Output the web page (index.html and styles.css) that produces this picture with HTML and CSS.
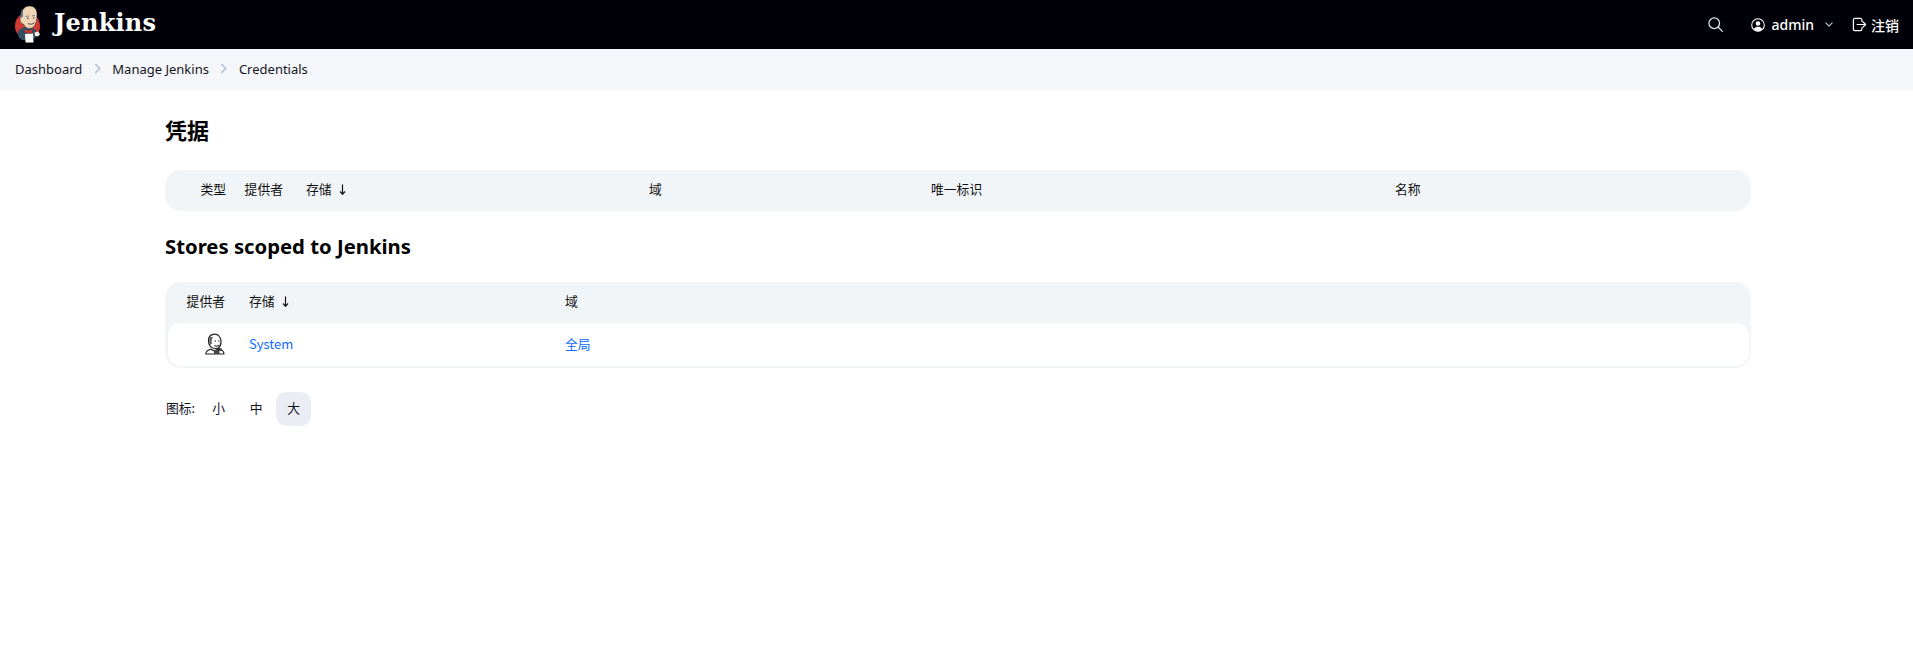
FILE: index.html
```html
<!DOCTYPE html>
<html lang="zh">
<head>
<meta charset="utf-8">
<title>Credentials - Jenkins</title>
<link rel="stylesheet" href="styles.css">
</head>
<body>
<header class="topbar">
  <div class="brand">
    <svg class="logo" viewBox="0 0 28 38" width="28" height="38">
      <ellipse cx="13.500" cy="21" rx="12.500" ry="13.500" fill="#d33833"/>
      <path d="M3.500 27c2-3 5-4.500 8-5l8 1.500c2.500 1 3.500 3 3.500 6l-2 4-4 1.500h-9L5 33z" fill="#335061"/>
      <path d="M8 9c0-5 3-8 7.500-8S23 4 23 9c0 4.500-.5 8-2 11-1.200 2.300-3 3.500-5.500 3.500-3 0-5-2-6-4.500-2 0-3.500-2-3.500-4.500 0-2.500 1-4 2-5.500z" fill="#f0d6b7" stroke="#231f20" stroke-width=".5"/>
      <path d="M7 13c-1-3.500-.5-7 2-9.500-.5 3-.5 5 0 7.500-.5 1-1.200 1.500-2 2z" fill="#49728b"/>
      <path d="M11.500 11.500l3.500-.6M18 10.800l3-.2" stroke="#49728b" stroke-width=".8"/>
      <path d="M13 13.200h1.600M19 13h1.300" stroke="#231f20" stroke-width="1"/>
      <path d="M14 18.500c2 1 4.500 1 6.500-.8" stroke="#231f20" stroke-width=".8" fill="none"/>
      <path d="M11 24.500l3.500 1.200 3.500-1.200.5 3-3 .3-1 1-1-1-3-.3z" fill="#d33833" stroke="#7a1a18" stroke-width=".3"/>
      <path d="M11 29l8-.5.5 9H11.500z" fill="#fff"/>
      <path d="M20.500 27.500l4-1 1.500 3-2 2-3-.5z" fill="#f0e6da"/>
    </svg>
    <span class="wordmark">Jenkins</span>
  </div>
  <div class="actions">
    <svg class="icon search" viewBox="0 0 24 24" width="15" height="15"><circle cx="10" cy="10" r="8.500"/><path d="M16.500 16.500L23 23"/></svg>
    <div class="user">
      <svg class="avatar" viewBox="0 0 16 16" width="14" height="14"><circle cx="8" cy="8" r="7.200" fill="none" stroke="#fff" stroke-width="1.200"/><circle cx="8" cy="6.300" r="2.600" fill="#fff"/><path d="M3.300 12.600C4.200 10.600 6 10 8 10s3.800.6 4.700 2.600C11.500 14.200 9.800 15 8 15s-3.500-.8-4.700-2.400z" fill="#fff"/></svg>
      <span>admin</span>
      <svg class="icon chevron" viewBox="0 0 10 6" width="8" height="5"><path d="M1 1l4 4 4-4"/></svg>
    </div>
    <div class="logout">
      <svg class="icon" viewBox="0 0 16 16" width="15" height="15"><path d="M10.500 4.500V3A1.500 1.500 0 0 0 9 1.500H3A1.500 1.500 0 0 0 1.500 3v10A1.500 1.500 0 0 0 3 14.500h6a1.500 1.500 0 0 0 1.500-1.500v-1.500"/><path d="M5.500 8h9M11.500 5l3 3-3 3"/></svg>
      <span>注销</span>
    </div>
  </div>
</header>
<nav class="crumbs">
  <span>Dashboard</span>
  <svg class="sep" viewBox="0 0 8 12" width="7" height="11"><path d="M1.500 1l5 5-5 5"/></svg>
  <span>Manage Jenkins</span>
  <svg class="sep" viewBox="0 0 8 12" width="7" height="11"><path d="M1.500 1l5 5-5 5"/></svg>
  <span>Credentials</span>
</nav>
<main class="content">
  <h1>凭据</h1>
  <div class="table head-only">
    <div class="row-head cols-a">
      <span class="right">类型</span>
      <span class="right">提供者</span>
      <span class="sorted">存储<svg class="arrow" viewBox="0 0 7 11" width="7" height="11"><path d="M3.500 .5v9.500M1 7.500L3.500 10.300 6 7.500"/></svg></span>
      <span>域</span>
      <span>唯一标识</span>
      <span>名称</span>
    </div>
  </div>
  <h2>Stores scoped to Jenkins</h2>
  <div class="table">
    <div class="row-head cols-b">
      <span class="right">提供者</span>
      <span class="sorted">存储<svg class="arrow" viewBox="0 0 7 11" width="7" height="11"><path d="M3.500 .5v9.500M1 7.500L3.500 10.300 6 7.500"/></svg></span>
      <span>域</span>
    </div>
    <div class="row-body cols-b">
      <span class="right cell-icon">
        <svg class="butler" viewBox="0 0 20 22" width="20" height="22">
          <path d="M5 13C3 10 3 5 5 3c2.500-2.500 7-2.500 9 0 2 2.500 2.500 6 1.500 9-.7 2.200-2.300 3.500-4.500 3.500-2.500 0-5-1-6-2.500z" fill="#fff" stroke="#222" stroke-width="1.200"/>
          <path d="M5 4C3.800 6.500 3.800 9.500 5 12l2-1.500c-.7-2.500-.2-4.500 1-6.500z" fill="#666"/>
          <path d="M9.500 8h1.500M13 8h1.500M9.500 12.500c1.500 1 3.500.8 5-.6" stroke="#222" stroke-width="1.100" fill="none"/>
          <path d="M.8 21c0-2.500 2-4 5-4.800l3.200 1.600 4.500-1.800c3 .6 5.500 2.200 5.500 5z" fill="#fff" stroke="#222" stroke-width="1.100"/>
          <path d="M9 17h5.500v4H9z" fill="#444"/>
          <path d="M13 15l4 .5-.5 2.500-3.500-.5z" fill="#333"/>
        </svg>
      </span>
      <a class="store-link">System</a>
      <a class="domain-link">全局</a>
    </div>
  </div>
  <div class="sizes">
    <span class="sizes-label">图标:</span>
    <span class="size">小</span>
    <span class="size">中</span>
    <span class="size active">大</span>
  </div>
</main>
</body>
</html>
```
FILE: styles.css
```css
* { box-sizing: border-box; }
html, body { margin: 0; padding: 0; background: #fff; }
body {
  font-family: "Noto Sans", "Noto Sans CJK SC", sans-serif;
  font-size: 13px;
  color: #14141f;
  height: 647px;
  overflow: hidden;
}
.topbar {
  height: 49px;
  background: #000008;
  color: #fff;
  display: flex;
  align-items: center;
  justify-content: space-between;
  padding: 0 14px 0 14px;
}
.brand { display: flex; align-items: center; gap: 12px; }
.logo { display: block; margin-top: -1px; }
.wordmark {
  font-family: "DejaVu Serif", serif;
  font-weight: 700;
  font-size: 24px;
  line-height: 30px;
  letter-spacing: .2px;
  color: #fff;
  margin-top: -3px;
}
.actions { display: flex; align-items: center; font-size: 14px; font-weight: 500; }
.icon { fill: none; stroke: #fff; stroke-width: 1.300; stroke-linecap: round; stroke-linejoin: round; }
.search { stroke-width: 2; stroke: #e6e6e6; margin-right: 28px; }
.user { display: flex; align-items: center; gap: 6px; margin-right: 19px; }
.chevron { margin-left: 5px; stroke: #ccc; }
.logout { display: flex; align-items: center; gap: 4px; font-family: "Noto Sans CJK SC", sans-serif; font-weight: 500; }
.crumbs {
  height: 41px;
  background: #f4f6f9;
  display: flex;
  align-items: center;
  padding: 0 0 2px 15px;
  gap: 11.500px;
  font-size: 13px;
}
.sep { fill: none; stroke: #b4c2d9; stroke-width: 1.800; }
.content { padding: 0 162px 0 165px; }
h1 {
  margin: 0;
  padding-top: 25px;
  height: 80px;
  font-size: 22px;
  line-height: 28px;
  font-weight: 700;
  color: #000;
  font-family: "Noto Sans CJK SC", sans-serif;
}
h2 {
  margin: 0;
  padding-top: 21px;
  height: 71px;
  font-size: 20.300px;
  line-height: 28px;
  font-weight: 700;
  color: #000;
}
.table {
  background: #f2f5f8;
  border-radius: 16px;
  padding: 0 2.500px 2px 3px;
  font-size: 12.800px;
  font-family: "Noto Sans CJK SC", sans-serif;
}
.head-only { padding: 0; }
.row-head { height: 41px; display: grid; align-items: center; color: #111; padding-bottom: 4px; }
.cols-a { grid-template-columns: 61px 57px 366px 282px 464px 1fr; }
.cols-a .sorted { margin-left: 23px; }
.cols-b { grid-template-columns: 57px 340px 1fr; }
.cols-b .sorted, .cols-b .store-link { margin-left: 24px; }
.right { text-align: right; display: block; }
.sorted { display: flex; align-items: center; }
.arrow { margin-left: 7px; margin-top: 1px; fill: none; stroke: #111; stroke-width: 1.200; }
.row-body {
  height: 43px;
  background: #fff;
  border-radius: 13px;
  align-items: center;
  display: grid;
  font-size: 13px;
  padding-bottom: 3px;
}
.store-link, .domain-link { color: #0b6bff; }
.domain-link { font-family: "Noto Sans CJK SC", sans-serif; font-size: 12.800px; }
.cell-icon { height: 22px; margin-top: 2px; }
.butler { display: inline-block; vertical-align: top; }
.sizes {
  margin-top: 24px;
  display: flex;
  align-items: center;
  font-family: "Noto Sans CJK SC", sans-serif;
  font-size: 12.800px;
}
.sizes-label { margin-right: 6px; margin-left: 1px; padding-bottom: 3px; }
.size {
  width: 35px;
  height: 34px;
  border-radius: 10px;
  display: flex;
  align-items: center;
  justify-content: center;
  margin-right: 2.500px;
  padding-bottom: 3px;
}
.active { background: #eaedf4; }
```
